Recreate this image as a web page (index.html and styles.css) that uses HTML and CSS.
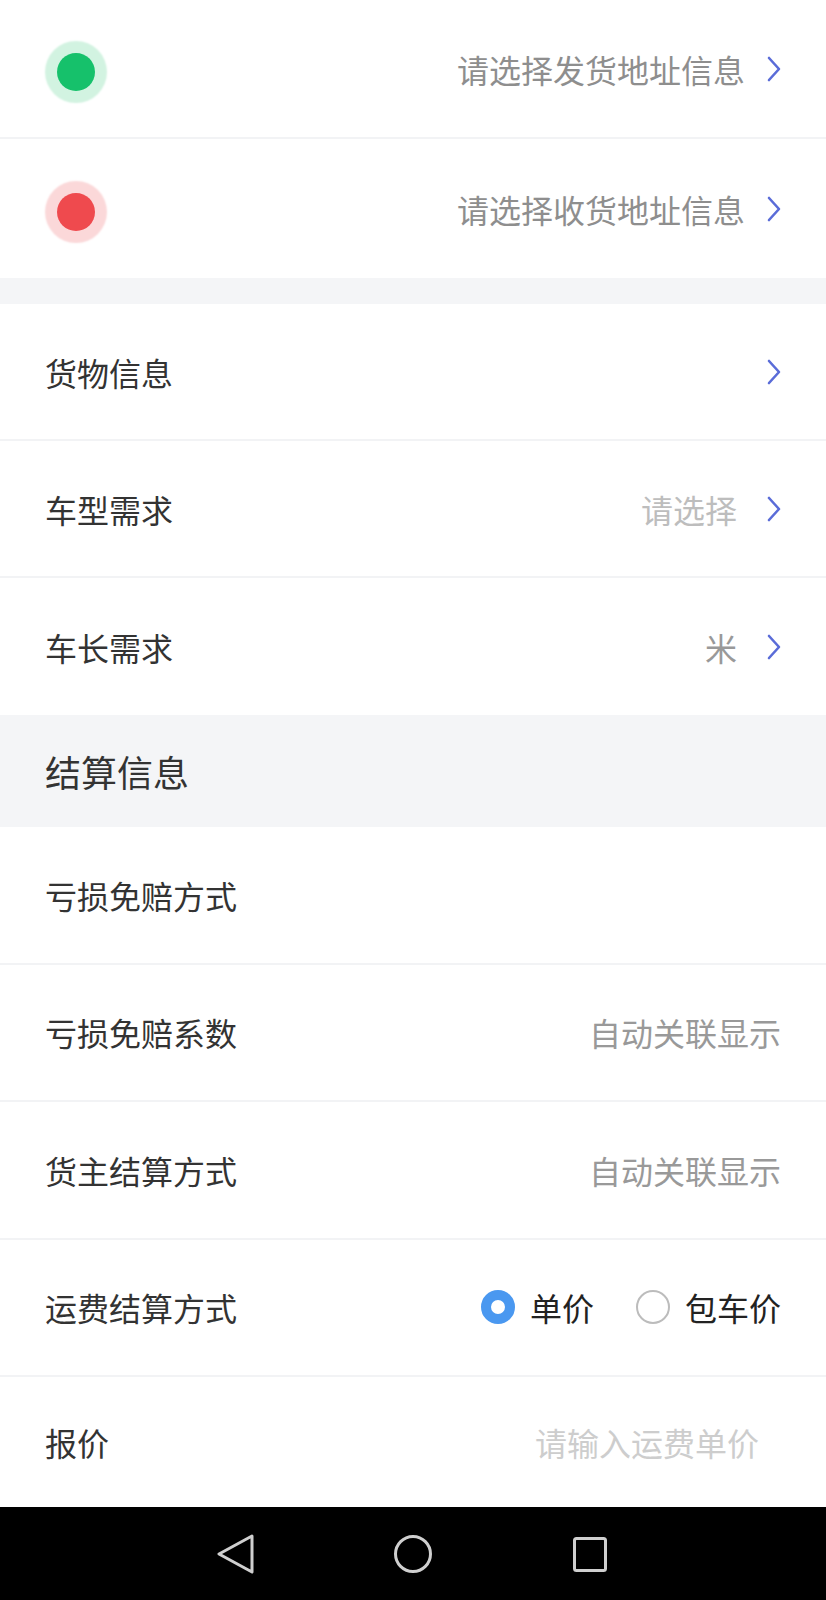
FILE: index.html
```html
<!DOCTYPE html>
<html lang="zh-CN">
<head>
    <meta charset="UTF-8">
    <meta name="viewport" content="width=device-width, initial-scale=1.0">
    <title>发布货源</title>
    <link rel="stylesheet" href="styles.css">
</head>
<body>
    <div class="page">
        <!-- 地址 -->
        <div class="addr-row">
            <span class="dot dot-green"></span>
            <span class="addr-value">请选择发货地址信息</span>
            <svg class="arrow" width="14" height="26" viewBox="0 0 14 26"><path d="M2 2 L12 13 L2 24"/></svg>
        </div>
        <div class="addr-row last">
            <span class="dot dot-red"></span>
            <span class="addr-value">请选择收货地址信息</span>
            <svg class="arrow" width="14" height="26" viewBox="0 0 14 26"><path d="M2 2 L12 13 L2 24"/></svg>
        </div>

        <div class="gap"></div>

        <div class="field">
            <span class="label">货物信息</span>
            <svg class="arrow" width="14" height="26" viewBox="0 0 14 26"><path d="M2 2 L12 13 L2 24"/></svg>
        </div>
        <div class="field">
            <span class="label">车型需求</span>
            <span class="value placeholder pad">请选择</span>
            <svg class="arrow" width="14" height="26" viewBox="0 0 14 26"><path d="M2 2 L12 13 L2 24"/></svg>
        </div>
        <div class="field last">
            <span class="label">车长需求</span>
            <span class="value pad">米</span>
            <svg class="arrow" width="14" height="26" viewBox="0 0 14 26"><path d="M2 2 L12 13 L2 24"/></svg>
        </div>

        <div class="section-title">结算信息</div>

        <div class="field tall">
            <span class="label">亏损免赔方式</span>
        </div>
        <div class="field tall">
            <span class="label">亏损免赔系数</span>
            <span class="value">自动关联显示</span>
        </div>
        <div class="field tall">
            <span class="label">货主结算方式</span>
            <span class="value">自动关联显示</span>
        </div>
        <div class="field tall">
            <span class="label">运费结算方式</span>
            <div class="radios">
                <label class="radio checked"><span class="radio-mark"></span>单价</label>
                <label class="radio"><span class="radio-mark"></span>包车价</label>
            </div>
        </div>
        <div class="field price last">
            <span class="label">报价</span>
            <input class="price-input" type="text" placeholder="请输入运费单价">
        </div>
    </div>

    <div class="navbar">
        <svg width="40" height="40" viewBox="0 0 40 40"><path d="M36 2 L3 20 L36 38 Z"/></svg>
        <svg width="40" height="40" viewBox="0 0 40 40"><circle cx="20" cy="20" r="17.5"/></svg>
        <svg width="40" height="40" viewBox="0 0 40 40"><rect x="4.5" y="4.5" width="31" height="32" rx="2"/></svg>
    </div>
</body>
</html>
```

FILE: styles.css
```css
body {
    margin: 0;
    background-color: #fff;
    font-family: "Noto Sans CJK SC", "Noto Sans", sans-serif;
    color: #333;
}

.page {
    width: 826px;
}

.addr-row,
.field {
    display: flex;
    align-items: center;
    box-sizing: border-box;
    padding: 0 45px 0 45px;
    border-bottom: 2px solid #f2f3f5;
    font-size: 32px;
}

.addr-row {
    height: 139px;
}

.field {
    height: 137px;
}

.field.tall {
    height: 137.5px;
}

.field.price {
    height: 130px;
}

.last {
    border-bottom: none;
}

.gap {
    height: 26px;
    background-color: #f4f5f7;
}

/* point vert / rouge */
.dot {
    width: 38px;
    height: 38px;
    margin-left: 12px;
    margin-top: 6px;
    border-radius: 50%;
}

.dot-green {
    background-color: #16c16b;
    box-shadow: 0 0 2px 12px #d2f3e1;
}

.dot-red {
    background-color: #ef4a4e;
    box-shadow: 0 0 2px 12px #fbd8d9;
}

.addr-value {
    margin-left: auto;
    color: #8e8e8e;
}

.arrow {
    margin-left: 22px;
    fill: none;
    stroke: #5a6cd8;
    stroke-width: 2.6;
    stroke-linecap: round;
    stroke-linejoin: round;
}

.label {
    color: #333;
    flex: 1;
}

.value {
    color: #999;
}

.value.placeholder {
    color: #bdbdbd;
}

.value.pad {
    margin-right: 8px;
}

.section-title {
    height: 112px;
    display: flex;
    align-items: center;
    padding-left: 45px;
    background-color: #f4f5f7;
    font-size: 36px;
    color: #333;
}

.radios {
    display: flex;
    align-items: center;
}

.radio {
    display: flex;
    align-items: center;
    color: #222;
}

.radio + .radio {
    margin-left: 42px;
}

.radio-mark {
    box-sizing: border-box;
    width: 34px;
    height: 34px;
    margin-right: 15px;
    border-radius: 50%;
    border: 2px solid #bcbcbc;
}

.radio.checked .radio-mark {
    border: 10px solid #4a98f0;
}

.price-input {
    width: 320px;
    border: none;
    outline: none;
    padding: 0 22px 0 0;
    text-align: right;
    font-family: inherit;
    font-size: 32px;
    color: #333;
    background: transparent;
}

.price-input::placeholder {
    color: #cdcdcd;
}

.navbar {
    height: 93px;
    background-color: #000;
    display: flex;
    align-items: center;
    justify-content: center;
    gap: 137px;
}

.navbar svg {
    fill: none;
    stroke: #cfcfcf;
    stroke-width: 3;
    stroke-linejoin: round;
}
```
